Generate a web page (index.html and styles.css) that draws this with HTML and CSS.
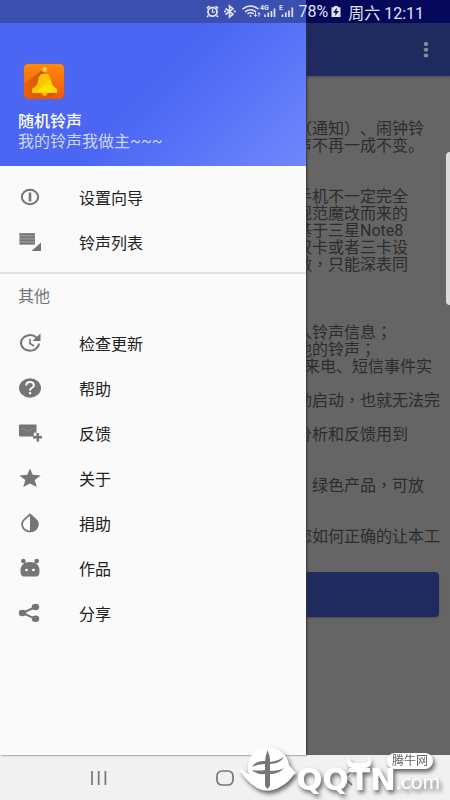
FILE: index.html
```html
<!DOCTYPE html>
<html lang="zh-CN">
<head>
<meta charset="utf-8">
<meta name="viewport" content="width=device-width, initial-scale=1">
<title>随机铃声</title>
<link rel="stylesheet" href="styles.css">
</head>
<body>
<div class="screen">
  <div class="page">
    <header class="appbar">
      <button class="more" type="button" aria-label="更多"><svg width="6" height="16" viewBox="0 0 6 16"><g fill="#8b8c92"><ellipse cx="3" cy="2" rx="2.3" ry="2"/><ellipse cx="3" cy="7.7" rx="2.3" ry="2"/><ellipse cx="3" cy="13.4" rx="2.3" ry="2"/></g></svg></button>
    </header>
    <main class="content">
      <p>（通知）、闹钟铃<br>声不再一成不变。</p>
      <p class="gap-2">手机不一定完全<br>规范魔改而来的<br>基于三星Note8<br>双卡或者三卡设<br>做<span class="mid" lang="zh-TW">，</span>只能深表同</p>
      <p class="gap-3">入铃声信息<span class="mid" lang="zh-TW">；</span><br>他的铃声<span class="mid" lang="zh-TW">；</span></p>
      <p class="half">来电、短信事件实</p>
      <p class="gap-1">动启动<span class="mid" lang="zh-TW">，</span>也就无法完</p>
      <p class="gap-1">分析和反馈用到</p>
      <p class="gap-2"><span class="mid" lang="zh-TW">，</span>绿色产品<span class="mid" lang="zh-TW">，</span>可放</p>
      <p class="gap-2">您如何正确的让本工</p>
      <button class="primary" type="button" aria-label="开始"></button>
    </main>
    <div class="edge-handle"></div>
  </div>

  <aside class="drawer">
    <div class="profile">
      <svg class="logo" width="42" height="37" viewBox="0 0 42 37">
        <defs>
          <linearGradient id="tile" x1="0" y1="0" x2="0" y2="1"><stop offset="0" stop-color="#ff8a08"/><stop offset="1" stop-color="#f0580f"/></linearGradient>
          <linearGradient id="shade" x1="1" y1="0" x2="0" y2="1"><stop offset="0" stop-color="#a83c05" stop-opacity=".9"/><stop offset="1" stop-color="#d95a08" stop-opacity=".2"/></linearGradient>
        </defs>
        <rect x=".5" y=".5" width="41" height="36" rx="5" fill="#a0606a"/>
        <rect x="1" y="1" width="40" height="34.5" rx="4.5" fill="url(#tile)"/>
        <path d="M19.500 7L1 21V31q0 4.500 4.500 4.500H24L34 29 22 10z" fill="url(#shade)"/>
        <circle cx="21.500" cy="6.500" r="2.700" fill="#ffb52e"/><circle cx="22" cy="6" r="1.200" fill="#fff0b0"/>
        <path d="M18.500 30h6q-.5 3-3 3t-3-3z" fill="#ffb300"/>
        <path d="M21.500 10.500c-4.500 0-6 3.500-6.500 7.500-.4 4-3.500 6.500-6 8V30h25v-4c-2.500-1.500-5.500-4-6-8-.5-4-2-7.500-6.500-7.500z" fill="#ffc400"/>
        <path d="M27.500 16.500L12 30h22v-4c-2.500-1.500-5.500-4-6-8z" fill="#ffe000"/>
        <path d="M9 28.500h25V30H9z" fill="#ffd21c"/>
      </svg>
      <strong class="name">随机铃声</strong>
      <span class="motto">我的铃声我做主~~~</span>
    </div>
    <nav>
      <ul class="menu">
        <li><a href="#"><svg viewBox="0 0 24 22"><ellipse cx="12" cy="11" rx="8.200" ry="7.200" fill="none" stroke="#757575" stroke-width="2"/><path d="M10.700 6.500h2.600v9h-2.600z" fill="#757575"/></svg>设置向导</a></li>
        <li><a href="#"><svg viewBox="0 0 24 22"><path d="M1.500 2.200H17v2.300H1.500zM1.500 5.200H17v2.300H1.500zM1.500 8.200H17v2.300H1.500zM1.500 11.200H17v2.300H1.500zM23 11.500V20H13.500z" fill="#757575"/><path d="M1.500 2.200H17v11.300H1.500z" fill="#757575" opacity=".5"/></svg>铃声列表</a></li>
      </ul>
      <h2>其他</h2>
      <ul class="menu more-items">
        <li><a href="#"><svg viewBox="0 0 24 22"><path d="M18.500 5.500A9 7.800 0 1 0 21 11.500" fill="none" stroke="#757575" stroke-width="2"/><path d="M22.500 1.500v7.500h-8z" fill="#757575"/><path d="M12 6.800v4.700l4 2.500" fill="none" stroke="#757575" stroke-width="1.600"/></svg>检查更新</a></li>
        <li><a href="#"><svg viewBox="0 0 24 22"><ellipse cx="12" cy="11" rx="11" ry="9.700" fill="#757575"/><path d="M8.200 8.500Q8.400 5 12 5t3.900 3.200Q15.900 9.700 13.700 11 12 12 12 13.800" fill="none" stroke="#fafafa" stroke-width="2"/><path d="M10.900 15.200h2.300v2h-2.300z" fill="#fafafa"/></svg>帮助</a></li>
        <li><a href="#"><svg viewBox="0 0 24 22"><path d="M2 2.500h15.500q1 0 1 1v7.300h-2.700v3.700H2q-1 0-1-1v-10q0-1 1-1z" fill="#757575"/><path d="M3 6l6.700 3.200L16.500 6" fill="none" stroke="#8c8c8c" stroke-width="1"/><path d="M18.500 11h2.600v3H24v2.500h-2.900v3h-2.600v-3H15V14h3.500z" fill="#757575"/></svg>反馈</a></li>
        <li><a href="#"><svg viewBox="0 0 24 22"><path d="M12 1.500l2.700 6.300 8 .6-6 4.700 2 6.900-6.700-3.600L5.300 20l2-6.900-6-4.700 8-.6z" fill="#757575"/></svg>关于</a></li>
        <li><a href="#"><svg viewBox="0 0 24 22"><path d="M12 2.500L6.500 7.400C1.500 12 5 19.500 12 19.500s10.500-7.500 5.500-12.100z" fill="none" stroke="#757575" stroke-width="1.700"/><path d="M12 2.500v17c7 0 10.500-7.500 5.500-12.100z" fill="#757575"/></svg>捐助</a></li>
        <li><a href="#"><svg viewBox="0 0 24 22"><path d="M12 5c6.500 0 9.500 4 9.500 8.500 0 4-1 6-4 6h-11c-3 0-4-2-4-6C2.500 9 5.500 5 12 5z" fill="#757575"/><circle cx="5.300" cy="4" r="2.300" fill="#757575"/><circle cx="18.700" cy="4" r="2.300" fill="#757575"/><path d="M5.300 4l3 4M18.700 4l-3 4" stroke="#757575" stroke-width="2"/><ellipse cx="8.500" cy="13" rx="1.500" ry="1.200" fill="#fafafa"/><ellipse cx="15.500" cy="13" rx="1.500" ry="1.200" fill="#fafafa"/></svg>作品</a></li>
        <li><a href="#"><svg viewBox="0 0 24 22"><path d="M17.500 5L4.500 11l13 5.800" fill="none" stroke="#757575" stroke-width="2"/><ellipse cx="17.500" cy="5" rx="3.700" ry="3.200" fill="#757575"/><ellipse cx="4.500" cy="11" rx="3.700" ry="3.200" fill="#757575"/><ellipse cx="17.500" cy="16.800" rx="3.700" ry="3.200" fill="#757575"/></svg>分享</a></li>
      </ul>
    </nav>
  </aside>

  <div class="status">
    <svg width="90" height="23" viewBox="0 0 90 23" fill="none" stroke="#dfe3f6">
      <ellipse cx="6.500" cy="11.800" rx="4.500" ry="4.300" stroke-width="1.800"/><path d="M6.500 9v3.200h2.300" stroke-width="1.200"/><path d="M.8 8.300L3.500 6M12.200 8.300L9.500 6M2.500 15.500L1 17M10.500 15.500L12 17" stroke-width="1.600"/>
      <path d="M19.500 8.500l7.500 5.700-3.500 2.800V6l3.500 2.800-7.500 5.700" stroke-width="1.600"/><path d="M18 11.400h2M27.700 11.400h2" stroke-width="1.800"/>
      <path d="M36.500 9.200q8-6.400 16 0M39 11.800q5.500-4.300 11 0M41.400 14q3.200-2.500 6.300 0" stroke-width="1.500"/><circle cx="44.500" cy="16" r=".9" fill="#dfe3f6" stroke="none"/><path d="M49.500 12.500v4M48.200 15l1.300 1.500 1.300-1.500M53 16.700v-4M51.700 14.200l1.300-1.500 1.300 1.500" stroke-width="1"/>
      <path d="M59 14.500V17M62.300 12.500V17M65.500 11v6M68.500 8.500V17" stroke-width="1.700"/>
      <path d="M76.500 14.500V17M79.800 12.500V17M83 10.500V17M86.300 7.500V17" stroke-width="1.700"/>
      <g fill="#dfe3f6" stroke="none" font-family="Roboto, sans-serif" font-size="7" font-weight="700"><text x="54" y="10">4G</text><text x="73" y="10">E</text></g>
    </svg>
    <span class="percent">78%</span>
    <svg width="10" height="23" viewBox="0 0 10 23"><path d="M3 6h4v1.300h2.500V17H.5V7.300H3z" fill="#dfe3f6"/><path d="M6 7.500L2 12.700h2.500L4 16l4-5H5.500z" fill="#10145c"/></svg>
    <span class="clock">周六 12:11</span>
  </div>

  <footer class="navbar">
    <button type="button" aria-label="最近"><svg width="18" height="16" viewBox="0 0 18 16"><path d="M2 1v14M8.700 1v14M15.400 1v14" stroke="#777" stroke-width="1.700"/></svg></button>
    <button type="button" aria-label="主页"><svg width="18" height="16" viewBox="0 0 18 16"><rect x="1" y="1" width="16" height="14" rx="5" fill="none" stroke="#777" stroke-width="1.700"/></svg></button>
    <button type="button" aria-label="返回"><svg width="18" height="16" viewBox="0 0 18 16"><path d="M10 1L2 8l8 7" fill="none" stroke="#777" stroke-width="1.700"/></svg></button>
  </footer>

  <div class="watermark">
    <svg width="56" height="48" viewBox="0 0 56 48">
      <path d="M8 20C9 8 17 1 28 1s20 8 21 18l6 7q-5 10-15 15-12 7-23 1Q3 33 1 24q5 6 10 7-4-5-3-11z" fill="#fff"/>
      <path d="M27.500 4q3 7 2.500 12 8-1 14-5-4 7-14 7v7q9 0 14-3-5 6-14 6v12l-2.500 3-2.500-3V28q-8 1-13-4 6 1 13 0v-6q-7 0-13 3 4-7 13-6 .5-5 2.500-11z" fill="#777"/>
      <path d="M1 24q8 9 24 8M55 26q-8 8-23 7" fill="none" stroke="#fff" stroke-width="3"/>
    </svg>
    <span class="brand">QQTN</span><span class="domain">.com</span>
    <svg class="horns" width="26" height="14" viewBox="0 0 26 14"><path d="M3 1Q-2 10 6 12h14q8-2 3-11 0 6-6 6H9Q3 7 3 1z" fill="#fff"/></svg>
    <span class="bubble">腾牛网</span>
  </div>
</div>
</body>
</html>
```
FILE: styles.css
```css
* { box-sizing: border-box; }
body {
  margin: 0;
  font-family: Roboto, "Noto Sans CJK SC", sans-serif;
  font-size: 16px;
  text-spacing-trim: space-all;
  background: #656565;
}
button { border: 0; padding: 0; background: none; }
svg { display: block; flex: none; }
.screen {
  position: relative;
  display: flex;
  flex-direction: column;
  min-height: 100vh;
  overflow: hidden;
}
.page { position: relative; flex: 1; background: #656565; }
.appbar {
  display: flex;
  justify-content: flex-end;
  align-items: center;
  height: 76px;
  padding: 23px 16px 0 0;
  background: #1f2a5f;
  box-shadow: 0 1px 2px #4c4c4c;
}
.more { display: flex; justify-content: center; width: 16px; }
.content {
  display: flow-root;
  padding: 44px 11px 0;
  line-height: 17px;
  color: #2c2c2c;
}
.content p { margin: 0 0 0 285px; white-space: nowrap; }
.content .gap-1 { margin-top: 17px; }
.content .gap-2 { margin-top: 34px; }
.content .gap-3 { margin-top: 51px; }
.content .half { text-indent: 8px; }
.mid { font-family: Roboto, "Noto Sans CJK TC", sans-serif; }
.primary {
  display: block;
  width: 100%;
  height: 45px;
  margin-top: 27px;
  border-radius: 4px;
  background: #1f2a5f;
  box-shadow: 0 1px 2px #505050;
}
.edge-handle {
  position: absolute;
  top: 152px;
  right: 0;
  width: 4px;
  height: 153px;
  border-radius: 4px 0 0 4px;
  background: #dcdcdc;
}
.drawer {
  position: absolute;
  top: 0;
  bottom: 45px;
  left: 0;
  width: 68%;
  background: #fafafa;
  box-shadow: 1px 0 2px #333;
}
.profile {
  display: flex;
  flex-direction: column;
  height: 166px;
  padding: 63px 18px 0;
  color: #fff;
  line-height: 20px;
  background: linear-gradient(135deg, #4a66f2 50%, #5873f7 70%, #7087fc);
}
.logo { margin: 0 0 12px 5px; }
.name { font-weight: 500; }
.motto { color: #cdd5fb; }
.menu { list-style: none; margin: 0; padding: 8px 0 8px; border-bottom: 2px solid #e0e0e0; }
.menu a {
  display: flex;
  align-items: center;
  gap: 37px;
  height: 45px;
  padding-left: 18px;
  color: #212121;
  text-decoration: none;
}
.menu svg { width: 24px; height: 22px; }
.menu.more-items { padding: 0; border: 0; }
.drawer h2 {
  margin: 0;
  padding-left: 18px;
  font-size: 16px;
  font-weight: 400;
  line-height: 46px;
  color: #757575;
}
.status {
  position: absolute;
  top: 0;
  left: 0;
  right: 0;
  display: flex;
  justify-content: flex-end;
  align-items: center;
  height: 23px;
  padding-right: 26px;
  color: #dfe3f6;
  background: linear-gradient(90deg, #3b4fb0 0 68%, #06085c 68%);
}
.percent { margin: 0 3px 0 2px; }
.clock { margin-left: 7px; }
.navbar {
  display: flex;
  justify-content: space-between;
  align-items: center;
  height: 45px;
  padding: 0 20%;
  background: #f1f1f1;
}
.watermark {
  position: absolute;
  right: 10px;
  bottom: 6px;
  display: flex;
  align-items: flex-end;
  color: #fff;
  filter: drop-shadow(2px 3px 2px #666);
}
.brand { font: 700 31px/30px "DejaVu Sans", sans-serif; }
.domain { font: 400 21px/27px Lato, sans-serif; }
.horns { position: absolute; left: 106px; top: 10px; }
.bubble {
  position: absolute;
  top: 7px;
  right: 7px;
  padding: 0 5px;
  border-radius: 8px;
  font-size: 12px;
  line-height: 16px;
  color: #666;
  background: #fff;
}
```
